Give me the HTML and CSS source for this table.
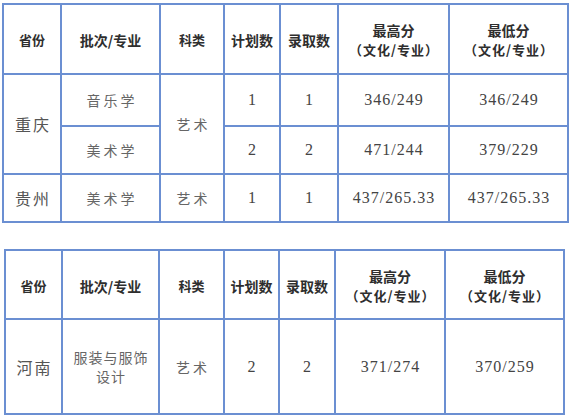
FILE: index.html
```html
<!DOCTYPE html>
<html lang="zh">
<head>
<meta charset="utf-8">
<link rel="stylesheet" href="styles.css">
</head>
<body>
<div class="page">
<table class="grid t1">
  <colgroup>
    <col style="width:58px"><col style="width:99px"><col style="width:64px"><col style="width:56px"><col style="width:58px"><col style="width:111px"><col style="width:119px">
  </colgroup>
  <tr class="head h1">
    <th class="sm">省份</th><th>批次/专业</th><th class="sm">科类</th><th>计划数</th><th>录取数</th>
    <th><span class="l1">最高分</span><span class="l2">（文化/专业）</span></th>
    <th><span class="l1">最低分</span><span class="l2">（文化/专业）</span></th>
  </tr>
  <tr class="r1">
    <td rowspan="2" class="prov">重庆</td><td class="zh">音乐学</td><td rowspan="2" class="zh">艺术</td><td class="num">1</td><td class="num">1</td><td class="num">346/249</td><td class="num">346/249</td>
  </tr>
  <tr class="r2">
    <td class="zh">美术学</td><td class="num">2</td><td class="num">2</td><td class="num">471/244</td><td class="num">379/229</td>
  </tr>
  <tr class="r2">
    <td class="prov">贵州</td><td class="zh">美术学</td><td class="zh">艺术</td><td class="num">1</td><td class="num">1</td><td class="num">437/265.33</td><td class="num">437/265.33</td>
  </tr>
</table>

<table class="grid t2">
  <colgroup>
    <col style="width:57px"><col style="width:97px"><col style="width:65px"><col style="width:55px"><col style="width:56px"><col style="width:110px"><col style="width:119px">
  </colgroup>
  <tr class="head h2">
    <th class="sm">省份</th><th>批次/专业</th><th class="sm">科类</th><th>计划数</th><th>录取数</th>
    <th><span class="l1">最高分</span><span class="l2">（文化/专业）</span></th>
    <th><span class="l1">最低分</span><span class="l2">（文化/专业）</span></th>
  </tr>
  <tr class="r3">
    <td class="prov">河南</td><td class="zh two"><span class="ln">服装与服饰</span><span class="ln">设计</span></td><td class="zh">艺术</td><td class="num">2</td><td class="num">2</td><td class="num">371/274</td><td class="num">370/259</td>
  </tr>
</table>
</div>
</body>
</html>
```

FILE: styles.css
```css
html, body {
  margin: 0;
  padding: 0;
  background: #ffffff;
}

.page {
  width: 570px;
  height: 416px;
  overflow: hidden;
  padding-top: 3px;
  box-sizing: border-box;
}

.grid {
  border-collapse: collapse;
  table-layout: fixed;
  font-family: "Noto Sans CJK SC", sans-serif;
  color: #4a4a4a;
}

.grid th,
.grid td {
  border: 2px solid #6b8fd2;
  padding: 0;
  text-align: center;
  vertical-align: middle;
}

.t1 {
  width: 565px;
  margin-left: 2px;
}

.t2 {
  width: 559px;
  margin-left: 4px;
  margin-top: 26px;
}

.head th {
  font-size: 14px;
  font-weight: 700;
  color: #2e2e2e;
  line-height: 20px;
  padding-top: 2px;
}

.head th.sm {
  font-size: 13px;
}

.l1, .l2 {
  display: block;
}

.l2 {
  font-size: 13px;
  letter-spacing: 1px;
  padding-left: 1px;
}

.h1 { height: 70px; }
.h2 { height: 69px; }
.r1 { height: 52px; }
.r2 { height: 48px; }
.r3 { height: 95px; }

.prov {
  font-size: 16px;
  letter-spacing: 2px;
  padding-left: 2px !important;
  color: #555555;
}

.zh {
  font-size: 14px;
  letter-spacing: 3px;
  padding-left: 3px !important;
  color: #666666;
}

.zh.two {
  letter-spacing: 1px;
  padding-left: 1px !important;
  line-height: 19px;
}

.ln {
  display: block;
}

.num {
  font-family: "Liberation Serif", serif;
  font-size: 16px;
  letter-spacing: 1px;
  padding-left: 1px !important;
  color: #444444;
}
```
